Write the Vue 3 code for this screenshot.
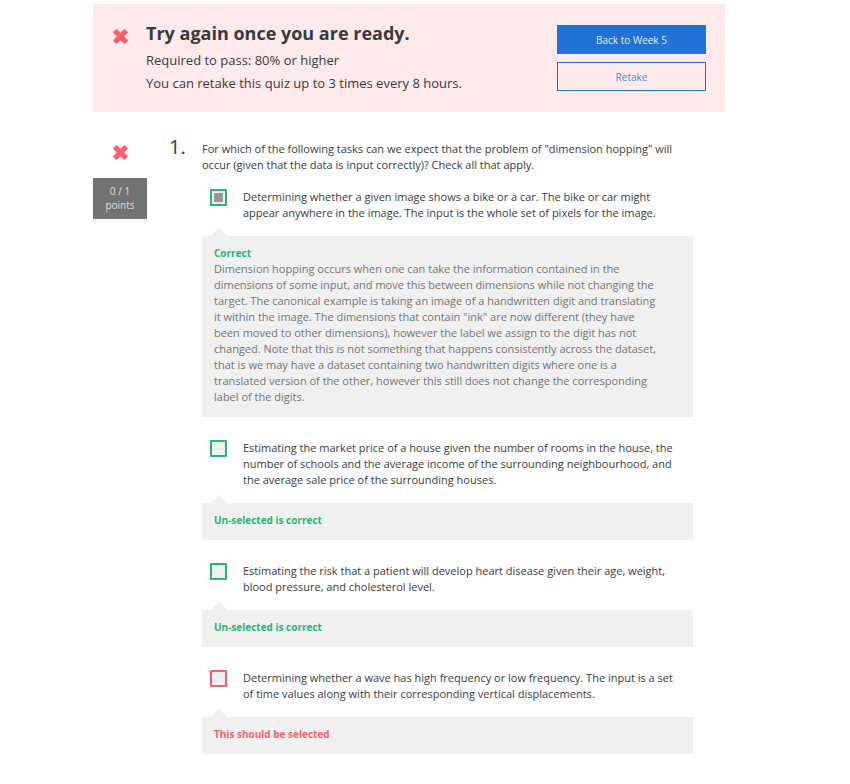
<script setup>
import { ref } from 'vue'

const crossPath =
  'M4.6 0.6 L8 4 L11.4 0.6 Q12.2 -0.2 13 0.6 L15.4 3 Q16.2 3.8 15.4 4.6 L12 8 L15.4 11.4 Q16.2 12.2 15.4 13 L13 15.4 Q12.2 16.2 11.4 15.4 L8 12 L4.6 15.4 Q3.8 16.2 3 15.4 L0.6 13 Q-0.2 12.2 0.6 11.4 L4 8 L0.6 4.6 Q-0.2 3.8 0.6 3 L3 0.6 Q3.8 -0.2 4.6 0.6 Z'

const options = ref([
  {
    text: 'Determining whether a given image shows a bike or a car. The bike or car might appear anywhere in the image. The input is the whole set of pixels for the image.',
    checked: true,
    right: true,
    verdict: 'Correct',
    note: 'Dimension hopping occurs when one can take the information contained in the dimensions of some input, and move this between dimensions while not changing the target. The canonical example is taking an image of a handwritten digit and translating it within the image. The dimensions that contain "ink" are now different (they have been moved to other dimensions), however the label we assign to the digit has not changed. Note that this is not something that happens consistently across the dataset, that is we may have a dataset containing two handwritten digits where one is a translated version of the other, however this still does not change the corresponding label of the digits.'
  },
  {
    text: 'Estimating the market price of a house given the number of rooms in the house, the number of schools and the average income of the surrounding neighbourhood, and the average sale price of the surrounding houses.',
    checked: false,
    right: true,
    verdict: 'Un-selected is correct'
  },
  {
    text: 'Estimating the risk that a patient will develop heart disease given their age, weight, blood pressure, and cholesterol level.',
    checked: false,
    right: true,
    verdict: 'Un-selected is correct'
  },
  {
    text: 'Determining whether a wave has high frequency or low frequency. The input is a set of time values along with their corresponding vertical displacements.',
    checked: false,
    right: false,
    verdict: 'This should be selected'
  }
])
</script>

<template>
  <main class="page">
    <header class="banner">
      <svg class="cross" viewBox="0 0 16 16" aria-hidden="true"><path :d="crossPath" /></svg>
      <div class="summary">
        <h1>Try again once you are ready.</h1>
        <p>Required to pass: 80% or higher</p>
        <p>You can retake this quiz up to 3 times every 8 hours.</p>
      </div>
      <div class="actions">
        <button type="button" class="button primary">Back to Week 5</button>
        <button type="button" class="button">Retake</button>
      </div>
    </header>

    <section class="question">
      <aside class="score">
        <svg class="cross" viewBox="0 0 16 16" aria-hidden="true"><path :d="crossPath" /></svg>
        <div class="points">0 / 1<br />points</div>
      </aside>
      <div class="number">1.</div>
      <div class="body">
        <p class="prompt">
          For which of the following tasks can we expect that the problem of "dimension hopping"
          will occur (given that the data is input correctly)? Check all that apply.
        </p>
        <ul class="options">
          <li v-for="(option, i) in options" :key="i" :class="option.right ? 'right' : 'wrong'">
            <label class="option" :for="`option-${i}`">
              <input :id="`option-${i}`" v-model="option.checked" type="checkbox" />
              <span>{{ option.text }}</span>
            </label>
            <div class="feedback">
              <strong>{{ option.verdict }}</strong>
              <p v-if="option.note">{{ option.note }}</p>
            </div>
          </li>
        </ul>
      </div>
    </section>
  </main>
</template>

<style>
body {
  background: #fff;
}
</style>

<style scoped>
.page {
  box-sizing: border-box;
  padding: 4px 125px 30px 93px;
  color: #373a3c;
  font: 11px/16px 'Open Sans', sans-serif;
}

h1,
p,
ul {
  margin: 0;
  padding: 0;
}

.cross {
  display: block;
  flex: none;
  width: 15px;
  height: 15px;
  fill: #ff5e6e;
}

.banner {
  display: flex;
  align-items: flex-start;
  padding: 16px 19px 17px 20px;
  background: #ffeaeb;
}

.banner .cross {
  margin-top: 9px;
}

.summary {
  flex: 1;
  margin-left: 18px;
  font-size: 13px;
  line-height: 23px;
}

h1 {
  margin-bottom: 3px;
  font-size: 18px;
  line-height: 26px;
  font-weight: 700;
}

.actions {
  display: flex;
  flex-direction: column;
  gap: 8px;
  width: 149px;
  padding-top: 5px;
}

.button {
  height: 29px;
  padding: 0;
  border: 1px solid #2073d5;
  background: transparent;
  color: #4f86cf;
  font: 10px/14px 'Open Sans', sans-serif;
  cursor: pointer;
}

.button.primary {
  background: #2073d5;
  color: #e4edf8;
}

.question {
  display: flex;
  align-items: flex-start;
  padding: 29px 32px 0 0;
}

.score {
  width: 54px;
  padding-top: 4px;
}

.score .cross {
  margin: 0 auto 18px;
}

.points {
  padding: 6px 0 7px;
  background: #737373;
  color: #dcdcdc;
  font-size: 10px;
  line-height: 14px;
  text-align: center;
}

.number {
  width: 33px;
  margin-left: 22px;
  font-size: 20px;
  line-height: 12px;
}

.body {
  flex: 1;
}

.options {
  display: grid;
  gap: 23px;
  margin-top: 16px;
  list-style: none;
}

.option {
  display: flex;
  align-items: flex-start;
  gap: 16px;
  padding: 0 8px;
}

.option input {
  appearance: none;
  box-sizing: border-box;
  flex: none;
  width: 17px;
  height: 17px;
  margin: 0;
  border: 2px solid #2ab573;
  border-radius: 1px;
  background: #f0f0f0;
}

.option input:checked {
  padding: 2px;
  background: #979797 content-box;
  box-shadow: inset 0 0 0 2px #f0f0f0;
}

.wrong .option input {
  border-color: #ff5e6e;
}

.feedback {
  position: relative;
  margin-top: 15px;
  padding: 9px 30px 12px 12px;
  background: #f0f0f0;
  color: #757575;
}

.feedback::before {
  content: '';
  position: absolute;
  bottom: 100%;
  left: 9px;
  border: solid transparent;
  border-width: 0 8px 8px;
  border-bottom-color: #f0f0f0;
}

.feedback strong {
  display: block;
  color: #2ab573;
  font-size: 10px;
  font-weight: 700;
}

.wrong .feedback strong {
  color: #ff5e6e;
}
</style>
